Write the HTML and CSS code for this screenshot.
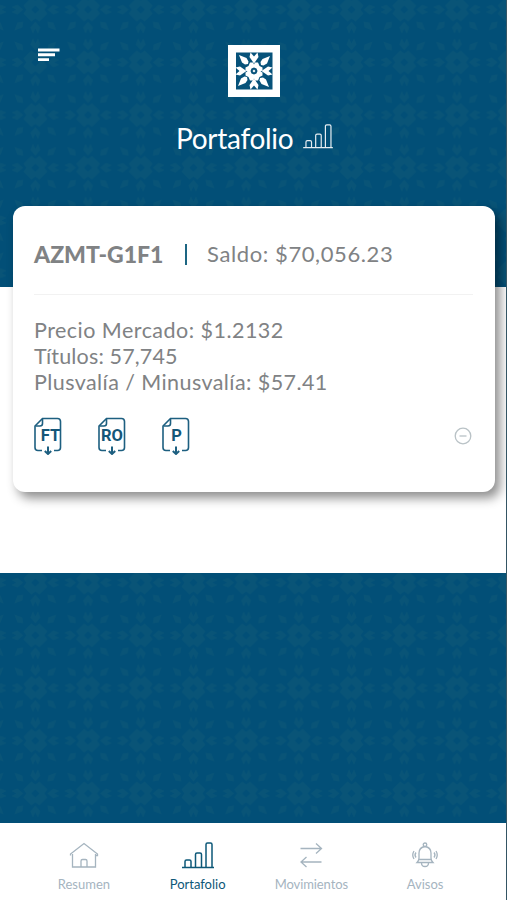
FILE: index.html
```
<!DOCTYPE html>
<html lang="es">
<head>
    <meta charset="UTF-8">
    <meta name="viewport" content="width=device-width, initial-scale=1.0">
    <title>Portafolio</title>
    <link rel="stylesheet" href="styles.css">
</head>
<body>
    <div class="app">
        <header class="header">
            <svg class="pattern">
                <defs>
                    <g id="flower">
                        <path id="petal" d="M-2.5 -24 L0 -19 L2.5 -24 L5 -18 L0 -12 L-5 -18Z"/>
                        <use href="#petal" transform="rotate(90)"/>
                        <use href="#petal" transform="rotate(180)"/>
                        <use href="#petal" transform="rotate(270)"/>
                        <path fill-rule="evenodd" d="M-4 -12 L0 -9 L4 -12 L8 -8 L12 -4 L9 0 L12 4 L8 8 L4 12 L0 9 L-4 12 L-8 8 L-12 4 L-9 0 L-12 -4 L-8 -8Z M0 -4 L-4 0 L0 4 L4 0Z"/>
                        <path d="M-21 -21l8 3 1 6-6-1z M21 -21l-8 3-1 6 6-1z M-21 21l8-3 1-6-6 1z M21 21l-8-3-1-6 6 1z"/>
                    </g>
                    <pattern id="tiles" width="52.7" height="52.7" patternUnits="userSpaceOnUse" patternTransform="translate(9 36)">
                        <use href="#flower" x="26.35" y="26.35" fill="#0b5677"/>
                    </pattern>
                </defs>
                <rect width="100%" height="100%" fill="url(#tiles)"/>
            </svg>
            <svg class="menu-icon" viewBox="0 0 22 14" fill="#fff">
                <path d="M0 0.5h21.5v3H0z M0 5.3h17v2.9H0z M0 10.2h11v2.9H0z"/>
            </svg>
            <svg class="logo" viewBox="0 0 52 52">
                <path d="M0 0h52v52H0z" fill="#fff"/>
                <path d="M8 7.500h36.500v37H8z" fill="#07527a"/>
                <g fill="#fff">
                    <g id="rays">
                        <path id="heart" d="M26 18.500 L21.500 12 L22.500 7.500 L26 11.500 L29.500 7.500 L30.500 12Z"/>
                        <use href="#heart" transform="rotate(90 26 26)"/>
                        <use href="#heart" transform="rotate(180 26 26)"/>
                        <use href="#heart" transform="rotate(270 26 26)"/>
                    </g>
                    <path id="leaf" d="M11 10l7.500 3 2 3.500-0.500 2.500-3 0.500-3-2z"/>
                    <use href="#leaf" transform="rotate(90 26 26)"/>
                    <use href="#leaf" transform="rotate(180 26 26)"/>
                    <use href="#leaf" transform="rotate(270 26 26)"/>
                    <path fill-rule="evenodd" d="M22 17.500h3l1 2 1-2h3l1.500 3.500 3 1.500v3l-2 1 2 1v3l-3 1.500-1.500 3.500h-3l-1-2-1 2h-3l-1.500-3.500-3-1.500v-3l2-1-2-1v-3l3-1.500z M26 22.500l-2.500 1-1 2.500 1 2.500 2.500 1 2.500-1 1-2.500-1-2.500z M26 24.500l1.500 1.500-1.500 1.500-1.500-1.500z"/>
                </g>
            </svg>
            <h1 class="title">
                <span class="title-text">Portafolio</span>
                <svg class="title-icon" viewBox="0 0 32 27" fill="none" stroke="currentColor">
                    <path id="bars" d="M0 25.500h32 M3 25.500v-6q0-1.500 1.500-1.500h3q1.500 0 1.500 1.500v6 M13.500 25.500v-13q0-1.500 1.500-1.500h3q1.500 0 1.500 1.500v13 M24 25.500V2.500q0-1.500 1.500-1.500h3q1.500 0 1.500 1.500v23"/>
                </svg>
            </h1>
        </header>

        <main class="content">
            <section class="card">
                <div class="card-head">
                    <span class="fund">AZMT-G1F1</span>
                    <span class="bar"></span>
                    <span class="balance">Saldo: $70,056.23</span>
                </div>
                <div class="details">
                    <div class="price">Precio Mercado: $1.2132</div>
                    <div class="shares">Títulos: 57,745</div>
                    <div class="gain">Plusvalía / Minusvalía: $57.41</div>
                </div>
                <div class="card-foot">
                    <svg class="doc" viewBox="0 0 28 38">
                        <g id="sheet" fill="none" stroke="#1d5f80" stroke-width="1.600">
                            <path d="M8 33.500H4q-3 0-3-3V9L8.500 1.500H23.500q3 0 3 3v26q0 3-3 3H20"/>
                            <path d="M8.500 2v4.500q0 2.500-2.500 2.500H1.500"/>
                            <path d="M14 29.500v7.500 M10.800 34l3.200 3 3.200-3" stroke-width="2"/>
                        </g>
                        <text x="16.500" y="23.800">FT</text>
                    </svg>
                    <svg class="doc" viewBox="0 0 28 38">
                        <use href="#sheet"/>
                        <text x="14" y="23.800">RO</text>
                    </svg>
                    <svg class="doc" viewBox="0 0 28 38">
                        <use href="#sheet"/>
                        <text x="14.500" y="23.800">P</text>
                    </svg>
                    <svg class="collapse" viewBox="0 0 18 18" fill="none" stroke="#b9c2c6" stroke-width="1.300">
                        <circle cx="9" cy="9" r="7.800"/>
                        <path d="M5.500 9h7"/>
                    </svg>
                </div>
            </section>
        </main>

        <div class="footer-band">
            <svg class="pattern"><rect width="100%" height="100%" fill="url(#tiles)"/></svg>
        </div>

        <nav class="tabs">
            <a class="tab">
                <svg class="tab-icon" viewBox="0 0 32 27" fill="none" stroke="currentColor">
                    <path d="M2.500 13.500V12L16 1.500 29.500 12v1.500H28 M4.500 12v13h23V12 M13 25v-6q0-1.500 1.500-1.500h3q1.500 0 1.500 1.500v6"/>
                </svg>
                <span class="tab-label">Resumen</span>
            </a>
            <a class="tab active">
                <svg class="tab-icon" viewBox="0 0 32 27" fill="none" stroke="currentColor">
                    <use href="#bars"/>
                </svg>
                <span class="tab-label">Portafolio</span>
            </a>
            <a class="tab">
                <svg class="tab-icon" viewBox="0 0 32 27" fill="none" stroke="currentColor">
                    <path d="M5.500 6.500h20.500 M21 1.500l5.500 5-5.500 5 M26.500 20H6 M11.500 15l-5.500 5 5.500 5"/>
                </svg>
                <span class="tab-label movements">Movimientos</span>
            </a>
            <a class="tab">
                <svg class="tab-icon" viewBox="0 0 32 27" fill="none" stroke="currentColor">
                    <path d="M8 20.500q2-2 2-4.500v-5q0-5.500 6-6.500 6 1 6 6.500v5q0 2.500 2 4.500z M9.500 17.500h13 M12.500 21q0 3.500 3.500 3.500t3.500-3.500"/>
                    <circle cx="16" cy="2.800" r="1.800"/>
                    <path d="M7 10.500q-2 2.500 0 5 M5 9q-2.500 4 0 8 M25 10.500q2 2.500 0 5 M27 9q2.500 4 0 8"/>
                </svg>
                <span class="tab-label">Avisos</span>
            </a>
        </nav>
    </div>
</body>
</html>
```
FILE: styles.css
```
* {
    box-sizing: border-box;
}
body {
    margin: 0;
    font-family: Lato, "Liberation Sans", sans-serif;
    background: #fff;
}
svg {
    display: block;
    flex-shrink: 0;
}
.app {
    display: flex;
    flex-direction: column;
    height: 900px;
    overflow: hidden;
    border-right: 1px solid #345564;
}
.header {
    position: relative;
    height: 287px;
    padding-top: 45px;
    background: #024f77;
    color: #fff;
}
.pattern {
    position: absolute;
    top: 0;
    left: 0;
    width: 100%;
    height: 100%;
    opacity: 0.8;
}
.menu-icon {
    position: absolute;
    top: 48px;
    left: 38px;
    width: 22px;
    height: 14px;
}
.logo {
    position: relative;
    width: 52px;
    height: 52px;
    margin-left: 228px;
}
.title {
    position: relative;
    display: flex;
    gap: 9px;
    height: 40px;
    margin: 21px 0 0 176px;
    font-size: 28px;
    font-weight: 400;
    line-height: 40px;
}
.title-text {
    width: 118px;
    letter-spacing: -0.3px;
    white-space: nowrap;
}
.title-icon {
    width: 30px;
    height: 25px;
    margin-top: 6px;
    stroke-width: 1.300;
    opacity: 0.9;
}
.content {
    height: 286px;
    padding: 0 11px 0 13px;
}
.card {
    position: relative;
    height: 286px;
    margin-top: -81px;
    padding: 0 22px 0 21px;
    background: #fff;
    border-radius: 12px;
    box-shadow: 5px 6px 11px rgba(0, 0, 0, 0.45);
    color: #808284;
}
.card-head {
    display: flex;
    align-items: center;
    height: 89px;
    padding-top: 7px;
    border-bottom: 1px solid #f2f2f2;
}
.fund {
    width: 151px;
    font-size: 23px;
    font-weight: 900;
}
.bar {
    width: 2px;
    height: 21px;
    margin: 2px 20px 0 0;
    background: #1d6683;
}
.balance {
    font-size: 22px;
    letter-spacing: 0.6px;
    white-space: nowrap;
}
.details {
    padding-top: 23px;
    font-size: 21.500px;
    line-height: 25.800px;
    white-space: nowrap;
}
.price {
    letter-spacing: 0.470px;
}
.shares {
    letter-spacing: 0.150px;
}
.gain {
    letter-spacing: 0.420px;
}
.card-foot {
    display: flex;
    gap: 36px;
    padding-top: 22px;
}
.doc {
    width: 28px;
    height: 38px;
}
.doc text {
    font: 700 16.500px Roboto, sans-serif;
    fill: #145678;
    text-anchor: middle;
}
.collapse {
    width: 18px;
    height: 18px;
    margin: 10px 1px 0 auto;
}
.footer-band {
    position: relative;
    height: 250px;
    background: #024f77;
}
.tabs {
    display: flex;
    height: 77px;
    padding: 19px 24px 0 27px;
}
.tab {
    display: flex;
    flex: 1;
    flex-direction: column;
    align-items: center;
    color: #a5b4bf;
}
.active {
    color: #0d5878;
}
.tab-icon {
    width: 32px;
    height: 27px;
    stroke-width: 1.300;
}
.tab-label {
    margin-top: 7px;
    font-size: 13px;
    line-height: 17px;
}
.movements {
    letter-spacing: -0.1px;
}
.active .tab-icon {
    stroke-width: 1.500;
}
```
